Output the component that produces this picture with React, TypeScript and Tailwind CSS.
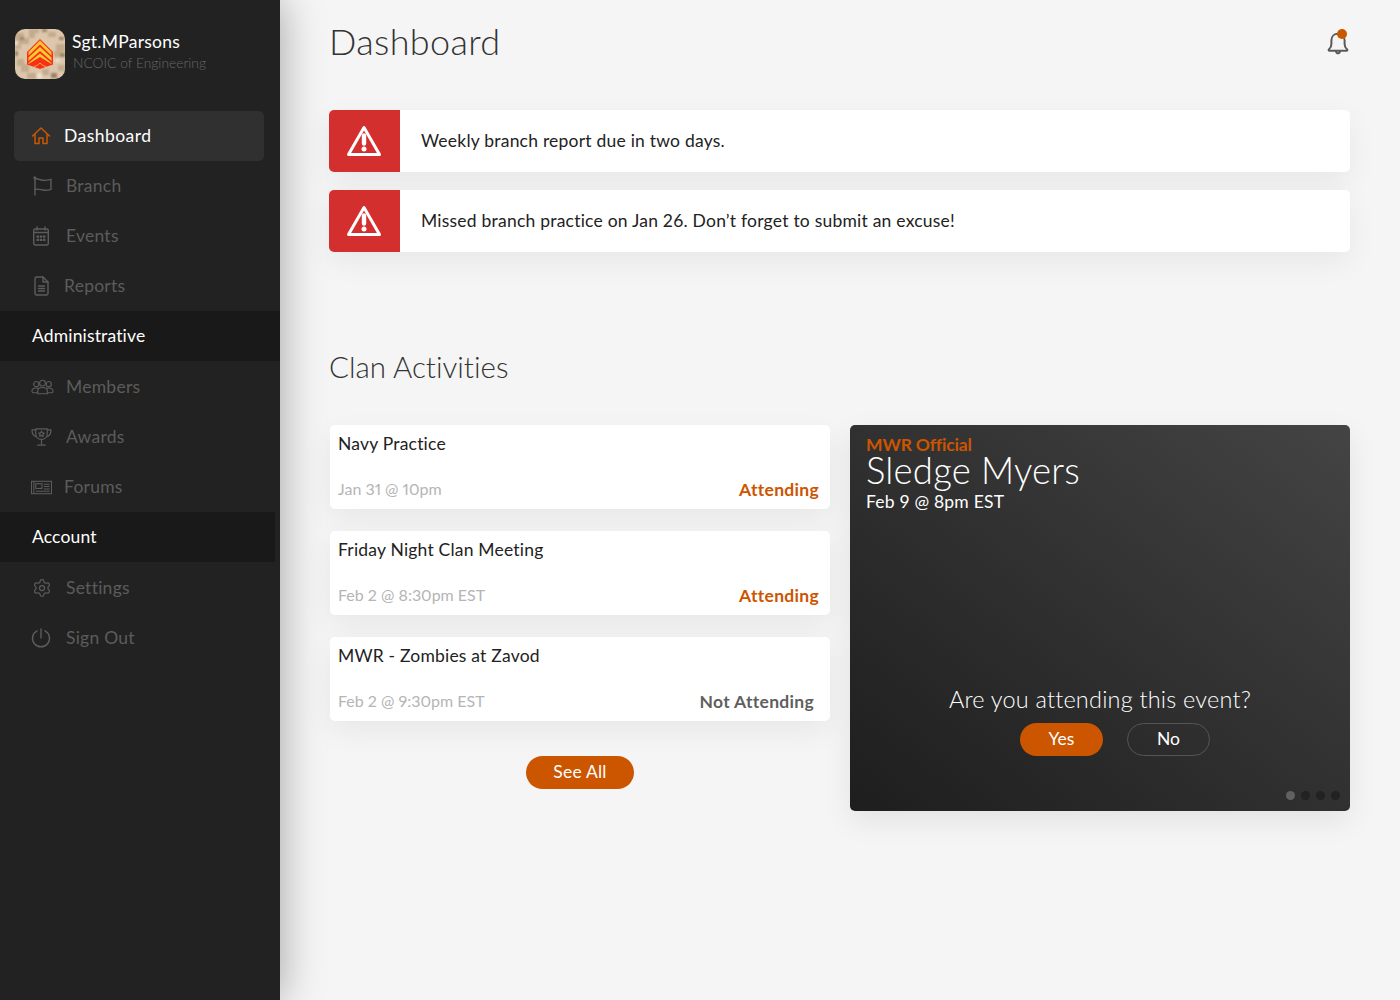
import React from 'react';
import { Settings } from 'lucide-react';

const font = 'font-["Lato","Open_Sans",sans-serif]';

const HomeIcon = ({ className }: { className?: string }) => (
  <svg viewBox="0 0 20 20" fill="none" stroke="currentColor" strokeWidth="1.5" strokeLinejoin="round" strokeLinecap="round" className={className}>
    <path d="M1.500 10 10 2l8.500 8" />
    <path d="M4 8.500V17.500h4V12h4v5.500h4V8.500" />
  </svg>
);

const FlagIcon = ({ className }: { className?: string }) => (
  <svg viewBox="0 0 20 20" fill="none" stroke="currentColor" strokeWidth="1.400" strokeLinecap="round" strokeLinejoin="round" className={className}>
    <circle cx="1.800" cy="1.800" r="0.800" />
    <path d="M2 2.500V19" />
    <path d="M2 3c3-1 4 1 8 1.300 3 .2 5.500-.3 8-1v10c-2.500.8-5 1.200-8 .7-3-.5-5-1.500-8-.6" />
  </svg>
);

const CalendarIcon = ({ className }: { className?: string }) => (
  <svg viewBox="0 0 18 20" fill="none" stroke="currentColor" strokeWidth="1.400" strokeLinecap="round" strokeLinejoin="round" className={className}>
    <rect x="1.700" y="3" width="14.600" height="16" rx="1.500" />
    <path d="M5 1v3M13 1v3M2 6.500h14" />
    <path d="M4.500 9.500h2.500v2.300H4.500zM7.800 9.500h2.500v2.300H7.800zM11 9.500h2.500v2.300H11zM4.500 12.800h2.500v2.300H4.500zM7.800 12.800h2.500v2.300H7.800zM11 12.800h2.500v2.300H11z" fill="currentColor" stroke="none" />
  </svg>
);

const ReportIcon = ({ className }: { className?: string }) => (
  <svg viewBox="0 0 15 20" fill="none" stroke="currentColor" strokeWidth="1.400" strokeLinecap="round" strokeLinejoin="round" className={className}>
    <path d="M2.500 1h6.500l5 5v11.500a1.500 1.500 0 0 1-1.500 1.500h-10a1.500 1.500 0 0 1-1.500-1.500v-15A1.500 1.500 0 0 1 2.500 1z" />
    <path d="M9 1v5h5M4.500 10h6M4.500 12.500h6M4.500 15h6" />
  </svg>
);

const PowerIcon = ({ className }: { className?: string }) => (
  <svg viewBox="0 0 20 20" fill="none" stroke="currentColor" strokeWidth="1.400" strokeLinecap="round" className={className}>
    <path d="M10 1v9" />
    <path d="M6 2.800a8.500 8.500 0 1 0 8 0" />
  </svg>
);

const MembersIcon = ({ className }: { className?: string }) => (
  <svg viewBox="0 0 24 16" fill="none" stroke="currentColor" strokeWidth="1.200" className={className}>
    <circle cx="12" cy="4" r="3" />
    <circle cx="5.500" cy="5" r="2.700" />
    <circle cx="18.500" cy="5" r="2.700" />
    <path d="M7 15v-3c0-2 2-3.500 5-3.500s5 1.500 5 3.500v3z" />
    <path d="M7 14H2.500C1.500 14 1 13.500 1 12.500c0-2 1.800-3.500 4.500-3.500 1 0 1.800.2 2.500.6" />
    <path d="M17 14h4.500c1 0 1.500-.5 1.500-1.500 0-2-1.800-3.500-4.500-3.500-1 0-1.800.2-2.500.6" />
  </svg>
);

const TrophyIcon = ({ className }: { className?: string }) => (
  <svg viewBox="0 0 22 20" fill="none" stroke="currentColor" strokeWidth="1.200" strokeLinejoin="round" className={className}>
    <path d="M5 1.500h12v5c0 3.500-2.500 6-6 6s-6-2.500-6-6z" />
    <path d="M5 2.500H1c0 4 1.500 6.500 5 7.500" />
    <path d="M17 2.500h4c0 4-1.500 6.500-5 7.500" />
    <path d="M11 12.500v5.500M6.500 18.500h9" />
    <path d="m11 3.800.9 1.900 2 .3-1.400 1.400.3 2-1.800-1-1.800 1 .3-2L8.100 6l2-.3z" />
  </svg>
);

const NewsIcon = ({ className }: { className?: string }) => (
  <svg viewBox="0 0 22 15" fill="none" stroke="currentColor" strokeWidth="1.100" className={className}>
    <rect x="0.500" y="1" width="21" height="13" />
    <path d="M3 1v13" />
    <rect x="5" y="3.500" width="6.500" height="5" />
    <path d="M13.500 4h6M13.500 6.500h6M13.500 9h6M5 11.500h14.500" />
  </svg>
);

const AlertIcon = () => (
  <svg viewBox="0 0 36 32" className="-ml-px h-[32px] w-[36px]" fill="none">
    <path d="M18 2.500 2.500 29.500h31z" stroke="white" strokeWidth="3" strokeLinejoin="round" />
    <path d="M18 10.500v8" stroke="white" strokeWidth="4.400" strokeLinecap="round" />
    <circle cx="18" cy="24" r="2.500" fill="white" />
  </svg>
);

const BellIcon = () => (
  <svg viewBox="0 0 24 26" className="h-[26px] w-[22px]" fill="none" stroke="#5a5a5a" strokeWidth="2.200" strokeLinejoin="round" strokeLinecap="round">
    <path d="M2 20c1.800-1.500 2.800-3 2.800-6V10c0-4 3-7 7.200-7s7.200 3 7.200 7v4c0 3 1 4.500 2.800 6 .5.500.2 1.500-.6 1.500H2.600c-.8 0-1.100-1-.6-1.500z" />
    <path d="M9.800 22c.3 1.500 1.100 2.200 2.200 2.200s1.900-.7 2.200-2.200" />
  </svg>
);

const Logo = () => (
  <svg viewBox="0 0 50 50" className="h-[50px] w-[50px] shrink-0 rounded-[10px]">
    <defs>
      <filter id="camo">
        <feGaussianBlur stdDeviation="1" />
      </filter>
    </defs>
    <rect width="50" height="50" fill="#dcc7ad" />
    <g filter="url(#camo)">
      <path d="M0 4h9v5h5v6H6v5H0zM14 0h10v4h-4v5h-6zM33 3h8v5h-8zM41 15h9v8h-4v5h-7v-6h2zM2 30h7v5h5v8H6v-6H2zM27 40h7v6h-7zM12 44h9v6h-9zM43 36h7v6h-7z" fill="#c4ab8d" />
      <path d="M27 0h5v3h-5zM5 8h4v3H5zM45 24h5v4h-5zM0 22h3v5H0zM36 44h6v5h-6zM44 8h5v3h-5z" fill="#9a8165" />
      <path d="M0 12h3v4H0zM22 44h5v6h-5zM40 30h5v3h-5z" fill="#ecdfcc" />
    </g>
    <path d="M25 10 38 23v12.500L25 40l-13-4.500V23z" fill="#f7301a" />
    <path d="M25 11.500 36.500 23v3.500L25 15.500 13.500 26.500V23zM25 18 36.500 28.500V32L25 22 13.500 32v-3.500zM25 24.500 36.500 34v1L25 28 13.500 35v-1z" fill="#fcc930" />
    <path d="M19 37.500c2.500-.5 4.500-2 6-3.500 1.500 1.500 3.500 3 6 3.500" fill="none" stroke="#fcc930" strokeWidth="0.800" />
  </svg>
);

const NavRow = ({ icon, label, tight }: { icon: React.ReactNode; label: string; tight?: boolean }) => (
  <div className="flex h-[50px] items-center text-[17.500px] tracking-[0.25px] text-[#5c5c5c]">
    <div className="flex w-[66px] justify-start pl-[31px]">{icon}</div>
    <span className={tight ? '-ml-[2px]' : ''}>{label}</span>
  </div>
);

const SectionRow = ({ label, narrow }: { label: string; narrow?: boolean }) => (
  <div className={`flex h-[50px] items-center bg-[#191919] pl-[32px] text-[17.500px] tracking-[0.15px] text-white ${narrow ? 'w-[275px]' : 'w-full'}`}>
    {label}
  </div>
);

const alerts = ['Weekly branch report due in two days.', 'Missed branch practice on Jan 26. Don’t forget to submit an excuse!'];

const activities = [
  { title: 'Navy Practice', date: 'Jan 31 @ 10pm', status: 'Attending', going: true },
  { title: 'Friday Night Clan Meeting', date: 'Feb 2 @ 8:30pm EST', status: 'Attending', going: true },
  { title: 'MWR - Zombies at Zavod', date: 'Feb 2 @ 9:30pm EST', status: 'Not Attending', going: false },
];

export default function App() {
  return (
    <div className={`flex min-h-[1000px] bg-[#f5f5f5] [font-variant-ligatures:none] ${font}`}>
      <aside className="relative z-10 w-[280px] shrink-0 bg-[#222222] shadow-[0_0_40px_rgba(0,0,0,0.35)]">
        <div className="flex h-[111px] items-start pl-[15px] pt-[29px]">
          <Logo />
          <div className="ml-[7px] pt-[2px]">
            <div className="text-[17.500px] leading-[22px] tracking-[0.25px] text-white">Sgt.MParsons</div>
            <div className="pl-px text-[13.800px] font-light leading-[20px] text-[#666666]">NCOIC of Engineering</div>
          </div>
        </div>
        <div className="mx-[14px] flex h-[50px] w-[250px] items-center rounded-[5px] bg-[#303030] pl-[17px] text-[17.500px] tracking-[0.45px] text-white">
          <HomeIcon className="h-[20px] w-[20px] text-[#cc5500]" />
          <span className="ml-[13px]">Dashboard</span>
        </div>
        <NavRow icon={<FlagIcon className="ml-[2px] h-[20px] w-[20px]" />} label="Branch" />
        <NavRow icon={<CalendarIcon className="ml-px h-[20px] w-[18px]" />} label="Events" />
        <NavRow icon={<ReportIcon className="ml-[3px] h-[20px] w-[15px]" />} label="Reports" tight />
        <SectionRow label="Administrative" />
        <div className="h-px" />
        <NavRow icon={<MembersIcon className="h-[16px] w-[23px]" />} label="Members" />
        <NavRow icon={<TrophyIcon className="h-[20px] w-[21px]" />} label="Awards" />
        <NavRow icon={<NewsIcon className="h-[15px] w-[21px]" />} label="Forums" tight />
        <SectionRow label="Account" narrow />
        <div className="h-px" />
        <NavRow icon={<Settings className="ml-px h-[20px] w-[20px]" strokeWidth={1.500} />} label="Settings" />
        <NavRow icon={<PowerIcon className="h-[20px] w-[20px]" />} label="Sign Out" />
      </aside>

      <main className="flex-1 pl-[49px] pr-[50px]">
        <div className="flex h-[110px] items-start justify-between pt-[19px]">
          <h1 className="text-[36px] font-light leading-[44px] tracking-[0.35px] text-[#333333]">Dashboard</h1>
          <div className="relative mr-px mt-[11px]">
            <BellIcon />
            <span className="absolute -top-[1px] right-[2px] h-[10px] w-[10px] rounded-full bg-[#cc5500]" />
          </div>
        </div>

        <div className="flex flex-col gap-[18px]">
          {alerts.map((text) => (
            <div key={text} className="flex h-[62px] items-center overflow-hidden rounded-[5px] bg-white shadow-[0_10px_30px_rgba(0,0,0,0.06)]">
              <div className="flex h-full w-[71px] items-center justify-center bg-[#d32f2f]">
                <AlertIcon />
              </div>
              <p className="pl-[21px] text-[17.500px] tracking-[0.22px] text-[#222222]">{text}</p>
            </div>
          ))}
        </div>

        <h2 className="mt-[96px] text-[29.500px] font-light leading-[38px] text-[#333333]">Clan Activities</h2>

        <div className="mt-[39px] flex gap-[20px] pl-px">
          <div className="w-[500px]">
            <div className="flex flex-col gap-[22px]">
              {activities.map((item) => (
                <div key={item.title} className="flex h-[84px] flex-col justify-between rounded-[5px] bg-white pb-[8px] pl-[8px] pt-[8px] shadow-[0_10px_30px_rgba(0,0,0,0.06)]">
                  <div className="text-[17.500px] leading-[22px] tracking-[0.2px] text-[#222222]">{item.title}</div>
                  <div className="flex items-end justify-between">
                    <span className="text-[16px] leading-[24px] text-[#b5b5b5] [font-variant-numeric:proportional-nums]">{item.date}</span>
                    <span className={`text-[17.500px] font-bold leading-[22px] tracking-[0.3px] ${item.going ? 'pr-[11px] text-[#cc5500]' : 'pr-[16px] text-[#5f5f5f]'}`}>{item.status}</span>
                  </div>
                </div>
              ))}
            </div>
            <div className="mt-[35px] flex justify-center">
              <button className="h-[33px] w-[108px] rounded-full bg-[#cc5500] text-[17.500px] tracking-[0.2px] text-white">See All</button>
            </div>
          </div>

          <div className="relative flex h-[386px] w-[500px] flex-col justify-between rounded-[5px] bg-gradient-to-tr from-[#1e1e1e] to-[#444444] px-[16px] pb-[55px] pt-[11px] shadow-[0_10px_30px_rgba(0,0,0,0.08)]">
            <div>
              <div className="text-[17.500px] font-bold leading-[18px] tracking-[-0.15px] text-[#cc5500]">MWR Official</div>
              <div className="text-[36.500px] font-light leading-[32px] tracking-[0.2px] text-white">Sledge Myers</div>
              <div className="mt-[5px] text-[17.500px] leading-[22px] tracking-[0.2px] text-white">Feb 9 @ 8pm EST</div>
            </div>
            <div className="flex flex-col items-center">
              <div className="text-[23.500px] font-light leading-[30px] tracking-[0.2px] text-white">Are you attending this event?</div>
              <div className="ml-[30px] mt-[9px] flex gap-[24px]">
                <button className="h-[33px] w-[83px] rounded-full bg-[#cc5500] text-[17.500px] text-white">Yes</button>
                <button className="h-[33px] w-[83px] rounded-full border border-[#555555] text-[17.500px] text-white">No</button>
              </div>
            </div>
            <div className="absolute bottom-[11px] right-[10px] flex gap-[6px]">
              <span className="h-[9px] w-[9px] rounded-full bg-[#616161]" />
              <span className="h-[9px] w-[9px] rounded-full bg-[#222222]" />
              <span className="h-[9px] w-[9px] rounded-full bg-[#222222]" />
              <span className="h-[9px] w-[9px] rounded-full bg-[#222222]" />
            </div>
          </div>
        </div>
      </main>
    </div>
  );
}
